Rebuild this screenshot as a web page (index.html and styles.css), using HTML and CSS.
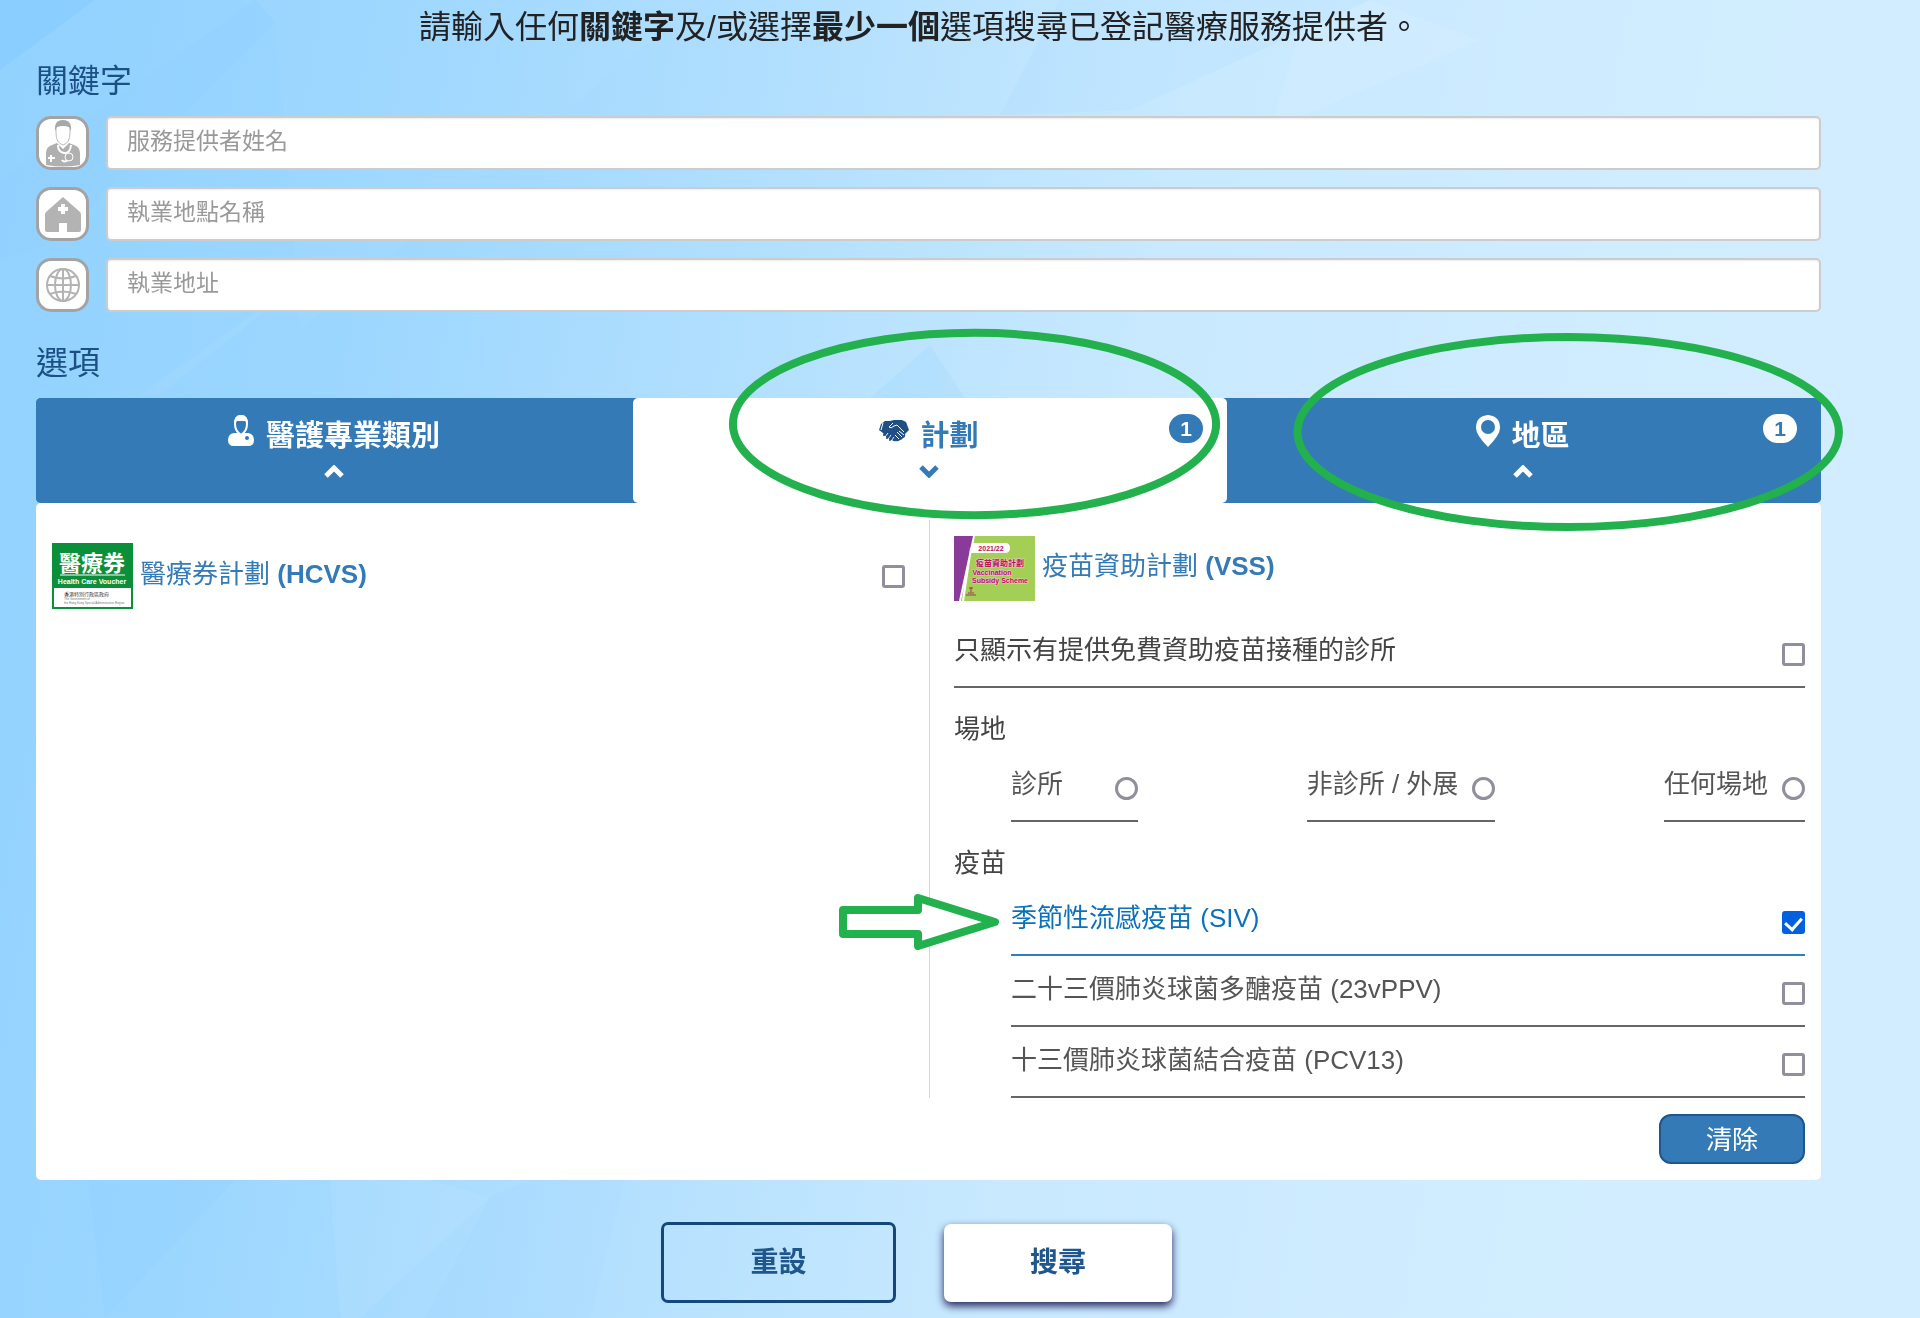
FILE: index.html
```html
<!DOCTYPE html>
<html lang="zh-Hant">
<head>
    <meta charset="UTF-8">
    <meta name="viewport" content="width=device-width, initial-scale=1.0">
    <title>搜尋已登記醫療服務提供者</title>
    <link rel="stylesheet" href="styles.css">
</head>
<body>
    <svg class="backdrop" viewBox="0 0 1920 1318" preserveAspectRatio="none" aria-hidden="true">
        <defs>
            <linearGradient id="sky" x1="0" y1="0" x2="1" y2="0.12">
                <stop offset="0" stop-color="#92d2ff"/>
                <stop offset="0.2" stop-color="#9bd6ff"/>
                <stop offset="0.45" stop-color="#b6e1fe"/>
                <stop offset="0.62" stop-color="#c8e9ff"/>
                <stop offset="0.85" stop-color="#d0ecff"/>
                <stop offset="1" stop-color="#d2edff"/>
            </linearGradient>
        </defs>
        <rect width="1920" height="1318" fill="url(#sky)"/>
        <polygon points="0,0 95,0 0,70" fill="#7cc7ff" opacity=".35"/>
        <polygon points="255,0 275,22 60,240 0,260 0,180" fill="#8accff" opacity=".15"/>
        <polygon points="255,0 700,0 300,330 275,22" fill="#fff" opacity=".03"/>
        <polygon points="1060,0 1370,0 1130,110 1000,115" fill="#8fd0ff" opacity=".1"/>
        <polygon points="1370,0 1480,40 1270,130 1300,30" fill="#fff" opacity=".08"/>
        <polygon points="230,330 330,260 160,395 140,395" fill="#fff" opacity=".05"/>
        <polygon points="930,345 965,398 870,398" fill="#8fd0ff" opacity=".2"/>
        <polygon points="88,1180 235,1180 105,1318" fill="#7cc7ff" opacity=".1"/>
        <polygon points="490,1197 530,1180 625,1180 590,1318 425,1318" fill="#8fd0ff" opacity=".08"/>
        <polygon points="490,1197 360,1318 340,1318 330,1180 430,1180" fill="#fff" opacity=".06"/>
    </svg>

    <form class="page">
        <p class="intro">請輸入任何<b>關鍵字</b>及/或選擇<b>最少一個</b>選項搜尋已登記醫療服務提供者。</p>

        <h2>關鍵字</h2>
        <div class="keywords">
            <label class="keyword">
                <span class="keyword-icon">
                    <svg viewBox="0 0 48 48" width="48" height="48" aria-hidden="true">
                        <path d="M7 46V34q0-6 6-8l5-2 6 6 6-6 5 2q6 2 6 8v12q-17 3-34 0z" fill="#b0b0b0"/>
                        <path d="M17 9q0-7 7-7t7 7v5q0 10-7 12-7-2-7-12z" fill="#fff" stroke="#bbb" stroke-width="1"/>
                        <path d="M16 12q-1-11 8-11t8 11l-2-4q-6-2-12 0z" fill="#a8a8a8"/>
                        <path d="M19 26q0 7 6 8t7-8M29 35v6q-4 3-6 0M12 36v7M9 39h7" fill="none" stroke="#fff" stroke-width="2"/>
                        <circle cx="30" cy="38" r="4" fill="#b0b0b0" stroke="#fff"/>
                    </svg>
                </span>
                <input type="text" placeholder="服務提供者姓名" aria-label="服務提供者姓名">
            </label>
            <label class="keyword">
                <span class="keyword-icon">
                    <svg viewBox="0 0 48 48" width="48" height="48" aria-hidden="true">
                        <path d="M24 7 41 22q1 1 1 3v15q0 2-2 2H28V33h-8v9H8q-2 0-2-2V25q0-2 1-3z" fill="#b3b3b3"/>
                        <path d="M24 14v10M19 19h10" stroke="#fff" stroke-width="4"/>
                    </svg>
                </span>
                <input type="text" placeholder="執業地點名稱" aria-label="執業地點名稱">
            </label>
            <label class="keyword">
                <span class="keyword-icon">
                    <svg viewBox="0 0 48 48" width="48" height="48" fill="none" stroke="#b3b3b3" stroke-width="2" aria-hidden="true">
                        <circle cx="24" cy="24" r="16"/>
                        <ellipse cx="24" cy="24" rx="8" ry="16"/>
                        <path d="M24 8v32M8 24h32M11 15q13 5 26 0M11 33q13-5 26 0"/>
                    </svg>
                </span>
                <input type="text" placeholder="執業地址" aria-label="執業地址">
            </label>
        </div>

        <h2>選項</h2>
        <div class="tabs">
            <button type="button" class="tab">
                <span class="tab-title">
                    <svg viewBox="0 0 28 32" width="28" height="32" aria-hidden="true">
                        <path d="M1 25q0-6 6-7h14q6 1 6 7 0 6-6 6H7q-6 0-6-6z" fill="#fff"/>
                        <path d="M8 9q0-8 6-8t6 8q0 7-6 11-6-4-6-11z" fill="#337ab7" stroke="#fff" stroke-width="2"/>
                        <path d="M7 9q0-9 7-9t7 9l-3-3H10z" fill="#fff"/>
                        <circle cx="20" cy="23" r="2" fill="#337ab7"/>
                    </svg>
                    醫護專業類別
                </span>
                <svg class="chevron" viewBox="0 0 20 13" width="20" height="13" aria-hidden="true"><path d="M2 11l8-8 8 8"/></svg>
            </button>
            <button type="button" class="tab active">
                <span class="tab-title">
                    <svg class="shake" viewBox="0 0 30 24" width="30" height="24" aria-hidden="true">
                        <path d="M6 2l5 0 4-1 8 0 4 2 3 8-4 4q1 3-2 4-1 2-3 2-2 2-4 1-2 1-4-1-5 0-9-7l-4-3 2-6z" fill="#1f4f86"/>
                        <path d="M14 4l-4 4q2 2 5-1l3-1 7 7M9 14l-3 4M12 16l-3 4M15 18l-3 4M18 13l5 5M16 16l4 4M4 4l-2 7M20 12l5 4" fill="none" stroke="#fff" stroke-width="1"/>
                        <path d="M5 16l3-3M8 19l3-4M11 21l3-4" stroke="#1f4f86" stroke-width="2" stroke-linecap="round"/>
                    </svg>
                    計劃
                </span>
                <svg class="chevron" viewBox="0 0 20 13" width="20" height="13" aria-hidden="true"><path d="M2 2l8 8 8-8"/></svg>
                <span class="badge">1</span>
                <svg class="ring ring-plan" aria-hidden="true"><ellipse cx="50%" cy="50%" rx="49%" ry="48%"/></svg>
            </button>
            <button type="button" class="tab">
                <span class="tab-title">
                    <svg viewBox="0 0 24 32" width="24" height="32" aria-hidden="true">
                        <path d="M12 0Q24 1 24 13q0 7-12 19Q0 20 0 13 0 1 12 0zm0 5a7 7 0 0 0 0 14 7 7 0 0 0 0-14z" fill="#fff" fill-rule="evenodd"/>
                    </svg>
                    地區
                </span>
                <svg class="chevron" viewBox="0 0 20 13" width="20" height="13" aria-hidden="true"><path d="M2 11l8-8 8 8"/></svg>
                <span class="badge">1</span>
                <svg class="ring ring-district" aria-hidden="true"><ellipse cx="50%" cy="50%" rx="49%" ry="48%"/></svg>
            </button>
        </div>

        <div class="panel">
            <div class="schemes">
                <div class="scheme scheme-hcvs">
                    <label class="scheme-head">
                        <svg viewBox="0 0 81 66" width="81" height="66" aria-hidden="true">
                            <rect width="81" height="66" fill="#0b8f3a"/>
                            <rect x="2" y="45" width="77" height="19" fill="#fff"/>
                            <text class="logo-tc" x="40" y="28" font-size="22" fill="#fff">醫療券</text>
                            <path d="M8 32h65" stroke="#fff" stroke-width="1"/>
                            <text class="logo-en" x="40" y="41" font-size="7" fill="#fff">Health Care Voucher</text>
                            <text x="12" y="53" font-size="5" fill="#333">香港特別行政區政府</text>
                            <text x="12" y="57" font-size="3" fill="#777">The Government of</text>
                            <text x="12" y="61" font-size="3" fill="#777">the Hong Kong Special Administrative Region</text>
                        </svg>
                        <span class="scheme-name">醫療券計劃 <b>(HCVS)</b></span>
                        <input type="checkbox">
                    </label>
                </div>

                <div class="scheme scheme-vss">
                    <div class="scheme-head">
                        <svg viewBox="0 0 81 65" width="81" height="65" aria-hidden="true">
                            <rect width="81" height="65" fill="#a3cf57"/>
                            <path d="M0 0h20L7 65H0z" fill="#8a3a99"/>
                            <path d="M20 0 6 65M17 12 9 65" stroke="#fff" stroke-width="2"/>
                            <path d="M19 7h32q5 0 5 5t-5 5H16z" fill="#fff"/>
                            <text class="logo-en" x="37" y="15" font-size="7" fill="#b5124f">2021/22</text>
                            <text class="logo-tc outlined" x="46" y="30" font-size="8">疫苗資助計劃</text>
                            <text class="logo-en outlined" x="38" y="39" font-size="7">Vaccination</text>
                            <text class="logo-en outlined" x="46" y="47" font-size="7">Subsidy Scheme</text>
                            <path d="M17 51v5M15 52h4M12 59h10M14 57h6" stroke="#a8325a" stroke-width="1"/>
                        </svg>
                        <span class="scheme-name">疫苗資助計劃 <b>(VSS)</b></span>
                    </div>

                    <label class="option">
                        <span>只顯示有提供免費資助疫苗接種的診所</span>
                        <input type="checkbox">
                    </label>

                    <div class="group-title">場地</div>
                    <div class="venues">
                        <label class="option"><span>診所</span><input type="radio" name="venue"></label>
                        <label class="option"><span>非診所 / 外展</span><input type="radio" name="venue"></label>
                        <label class="option"><span>任何場地</span><input type="radio" name="venue"></label>
                    </div>

                    <div class="group-title">疫苗</div>
                    <div class="vaccines">
                        <label class="option selected">
                            <svg class="arrow" viewBox="0 0 160 56" width="160" height="56" aria-hidden="true">
                                <path d="M4 16h75V4l77 24-77 24V40H4z"/>
                            </svg>
                            <span>季節性流感疫苗 (SIV)</span>
                            <input type="checkbox" checked>
                        </label>
                        <label class="option">
                            <span>二十三價肺炎球菌多醣疫苗 (23vPPV)</span>
                            <input type="checkbox">
                        </label>
                        <label class="option">
                            <span>十三價肺炎球菌結合疫苗 (PCV13)</span>
                            <input type="checkbox">
                        </label>
                    </div>
                </div>
            </div>
            <button type="button" class="clear">清除</button>
        </div>

        <div class="actions">
            <button type="reset" class="reset">重設</button>
            <button type="submit" class="search">搜尋</button>
        </div>
    </form>
</body>
</html>
```

FILE: styles.css
```css
* { box-sizing: border-box; }
body { margin: 0; background: #c8e9ff; font-family: "Liberation Sans", "Noto Sans CJK TC", sans-serif; font-size: 26px; line-height: 36px; color: #555; overflow-x: hidden; }
button, input { font-family: inherit; }
.backdrop { position: fixed; top: 0; left: 0; width: 100%; height: 100%; z-index: -1; }
.page { padding: 0 99px 0 36px; }

.intro { margin: 0; padding: 1px 18px 0 0; font-size: 32px; line-height: 52px; text-align: center; color: #222; }
h2 { margin: 0 0 6px; font-size: 32px; font-weight: normal; line-height: 57px; color: #1b4f86; }

/* keyword fields */
.keywords { display: grid; gap: 17px; margin-bottom: 23px; }
.keyword { display: flex; gap: 17px; height: 54px; }
.keyword-icon { flex: none; width: 53px; border: 3px solid #a3a3a3; border-radius: 15px; background: #fff; overflow: hidden; }
.keyword-icon svg { display: block; }
.keyword input { flex: 1; min-width: 0; padding: 0 19px 3px; border: 2px solid #ccc; border-radius: 5px; background: #fff; font-size: 23px; color: #555; box-shadow: inset 0 1px 2px rgba(0,0,0,0.08); }
.keyword input::placeholder { color: #999; opacity: 1; }

/* tabs */
.tabs { display: grid; grid-template-columns: 597fr 594fr 594fr; border-radius: 5px; background: #337ab7; }
.tab { position: relative; display: flex; flex-direction: column; align-items: center; height: 105px; padding: 16px 2px 0 0; border: none; border-radius: 5px; background: #337ab7; color: #fff; font-size: 29px; font-weight: bold; line-height: 44px; cursor: pointer; }
.tab.active { background: #fff; color: #337ab7; }
.tab-title { display: flex; gap: 11px; }
.tab-title svg { margin-top: 1px; }
.tab-title .shake { margin-top: 5px; }
.chevron { margin-top: 7px; fill: none; stroke: currentColor; stroke-width: 5; }
.badge { position: absolute; top: 16px; right: 24px; width: 34px; height: 29px; border-radius: 15px; background: #fff; color: #337ab7; font-size: 21px; line-height: 29px; text-align: center; }
.active .badge { background: #337ab7; color: #fff; }

/* hand-drawn marks */
.ring { position: absolute; z-index: 2; overflow: visible; fill: none; stroke: #22b14c; stroke-width: 8; pointer-events: none; }
.ring-plan { top: -69px; left: 16%; width: 83%; height: 190px; }
.ring-district { top: -65px; left: 11%; width: 93%; height: 198px; }
.arrow { position: absolute; top: 9px; left: -172px; fill: #fff; stroke: #22b14c; stroke-width: 8; stroke-linejoin: round; }

/* scheme panel */
.panel { display: flex; flex-direction: column; padding: 17px 16px 16px; border-radius: 5px; background: #fff; }
.schemes { display: grid; grid-template-columns: 878fr 875fr; }
.scheme-hcvs { padding: 23px 24px 0 0; border-right: 1px solid #d5d5d5; }
.scheme-vss { padding: 16px 0 0 24px; }
.scheme-head { display: flex; align-items: center; gap: 7px; color: #337ab7; }
.scheme-name { flex: 1; padding-bottom: 5px; }
.logo-tc, .logo-en { text-anchor: middle; font-weight: bold; }
.outlined { fill: #b5124f; stroke: #f6c9dc; stroke-width: 1; paint-order: stroke; }

.option { position: relative; display: flex; justify-content: space-between; gap: 14px; padding: 15px 0 18px; border-bottom: 2px solid #666; }
.option.selected { color: #0b72ba; border-color: #2a80c0; }
.scheme-head + .option { margin-top: 16px; color: #444; }
.group-title { padding: 23px 0 4px; color: #444; }
.venues { display: flex; justify-content: space-between; padding-left: 57px; }
.venues .option { min-width: 127px; }
.vaccines { padding-left: 57px; }

input[type="checkbox"], input[type="radio"] { appearance: none; flex: none; width: 23px; height: 23px; margin: 0; border: 3px solid #8f8f9d; border-radius: 3px; background: #fff; }
.option input[type="checkbox"], .option input[type="radio"] { margin-top: 11px; }
input[type="radio"] { border-radius: 50%; }
input[type="checkbox"]:checked { display: flex; justify-content: center; border-color: #0060df; background: #0060df; }
input[type="checkbox"]:checked::before { content: ""; flex: none; width: 8px; height: 13px; border: solid #fff; border-width: 0 3px 3px 0; transform: rotate(42deg); }

.clear { align-self: flex-end; width: 146px; height: 50px; margin-top: 16px; padding: 0 0 3px; border: 2px solid #1f568c; border-radius: 12px; background: #337ab7; color: #fff; font-size: 26px; cursor: pointer; }

/* bottom buttons */
.actions { display: flex; justify-content: center; align-items: center; gap: 48px; padding: 42px 24px 15px 0; }
.actions button { padding: 0 0 5px; border-radius: 7px; color: #1f568c; font-size: 28px; font-weight: bold; cursor: pointer; }
.reset { width: 235px; height: 81px; border: 3px solid #15487a; background: transparent; }
.search { width: 228px; height: 78px; border: none; background: #fff; box-shadow: 0 4px 8px #23235a; }
```
